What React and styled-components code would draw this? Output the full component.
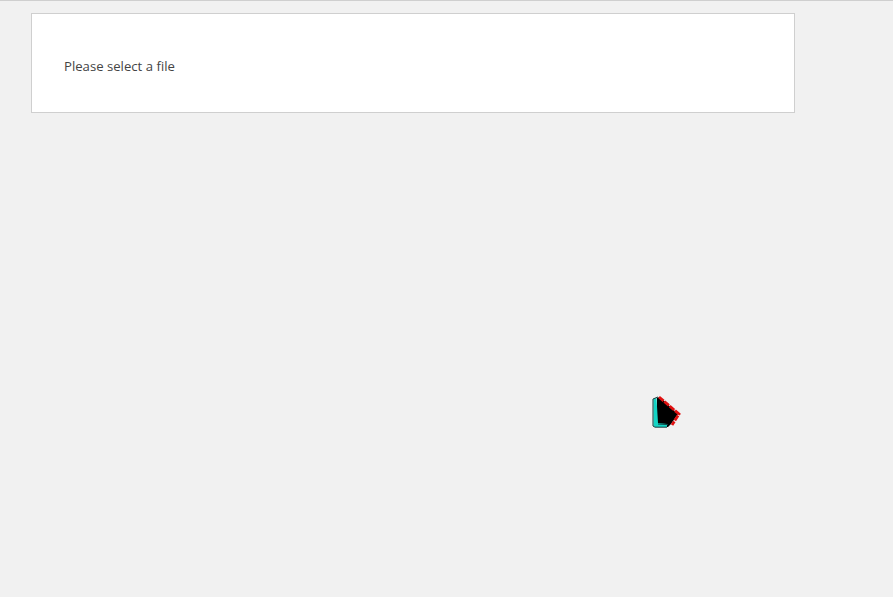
import React from 'react';
import styled, { createGlobalStyle } from 'styled-components';

const GlobalStyle = createGlobalStyle`
  html, body {
    margin: 0;
    padding: 0;
    height: 100%;
    background: #f1f1f1;
  }
`;

const Page = styled.main`
  position: relative;
  box-sizing: border-box;
  height: 597px;
  overflow: hidden;
  padding: 12px 0 0 31px;
  border-top: 1px solid #cfcfcf;
  background: #f1f1f1;
`;

const Card = styled.section`
  box-sizing: border-box;
  width: 764px;
  height: 100px;
  padding: 43px 32px 0;
  background: #fff;
  border: 1px solid #cfcfcf;
`;

const Message = styled.p`
  margin: 0;
  font-family: 'Open Sans', 'Noto Sans', sans-serif;
  font-size: 13.15px;
  line-height: 19px;
  color: #444;
`;

const Glyph = styled.svg`
  position: absolute;
  left: 652px;
  top: 393px;
`;

const BrokenGlyph = () => (
  <Glyph width="29" height="35" viewBox="0 0 29 35" aria-hidden="true">
    <path d="M5 4 L8 3 L26 20 L19 30 L16 33 L5 33 Z" fill="#000" />
    <path d="M7 3 L27 20 L20 31" fill="none" stroke="#e01010" strokeWidth="2.8" strokeDasharray="6 1" />
    <path d="M1.5 5 L4.5 4 L6 29 L15 30 L15 33 L3 33 L1.5 32 Z" fill="#14d4c4" />
    <path d="M1 5 L1 32 L3 33.2 L15 33.2" fill="none" stroke="#0b3d3d" strokeWidth="1" />
    <path d="M1 5 L6 3" fill="none" stroke="#0b3d3d" strokeWidth="1" />
    <path d="M6 30 L16 30.5" fill="none" stroke="#0b3d3d" strokeWidth="1" />
  </Glyph>
);

const App = () => (
  <Page>
    <GlobalStyle />
    <Card>
      <Message>Please select a file</Message>
    </Card>
    <BrokenGlyph />
  </Page>
);

export default App;
